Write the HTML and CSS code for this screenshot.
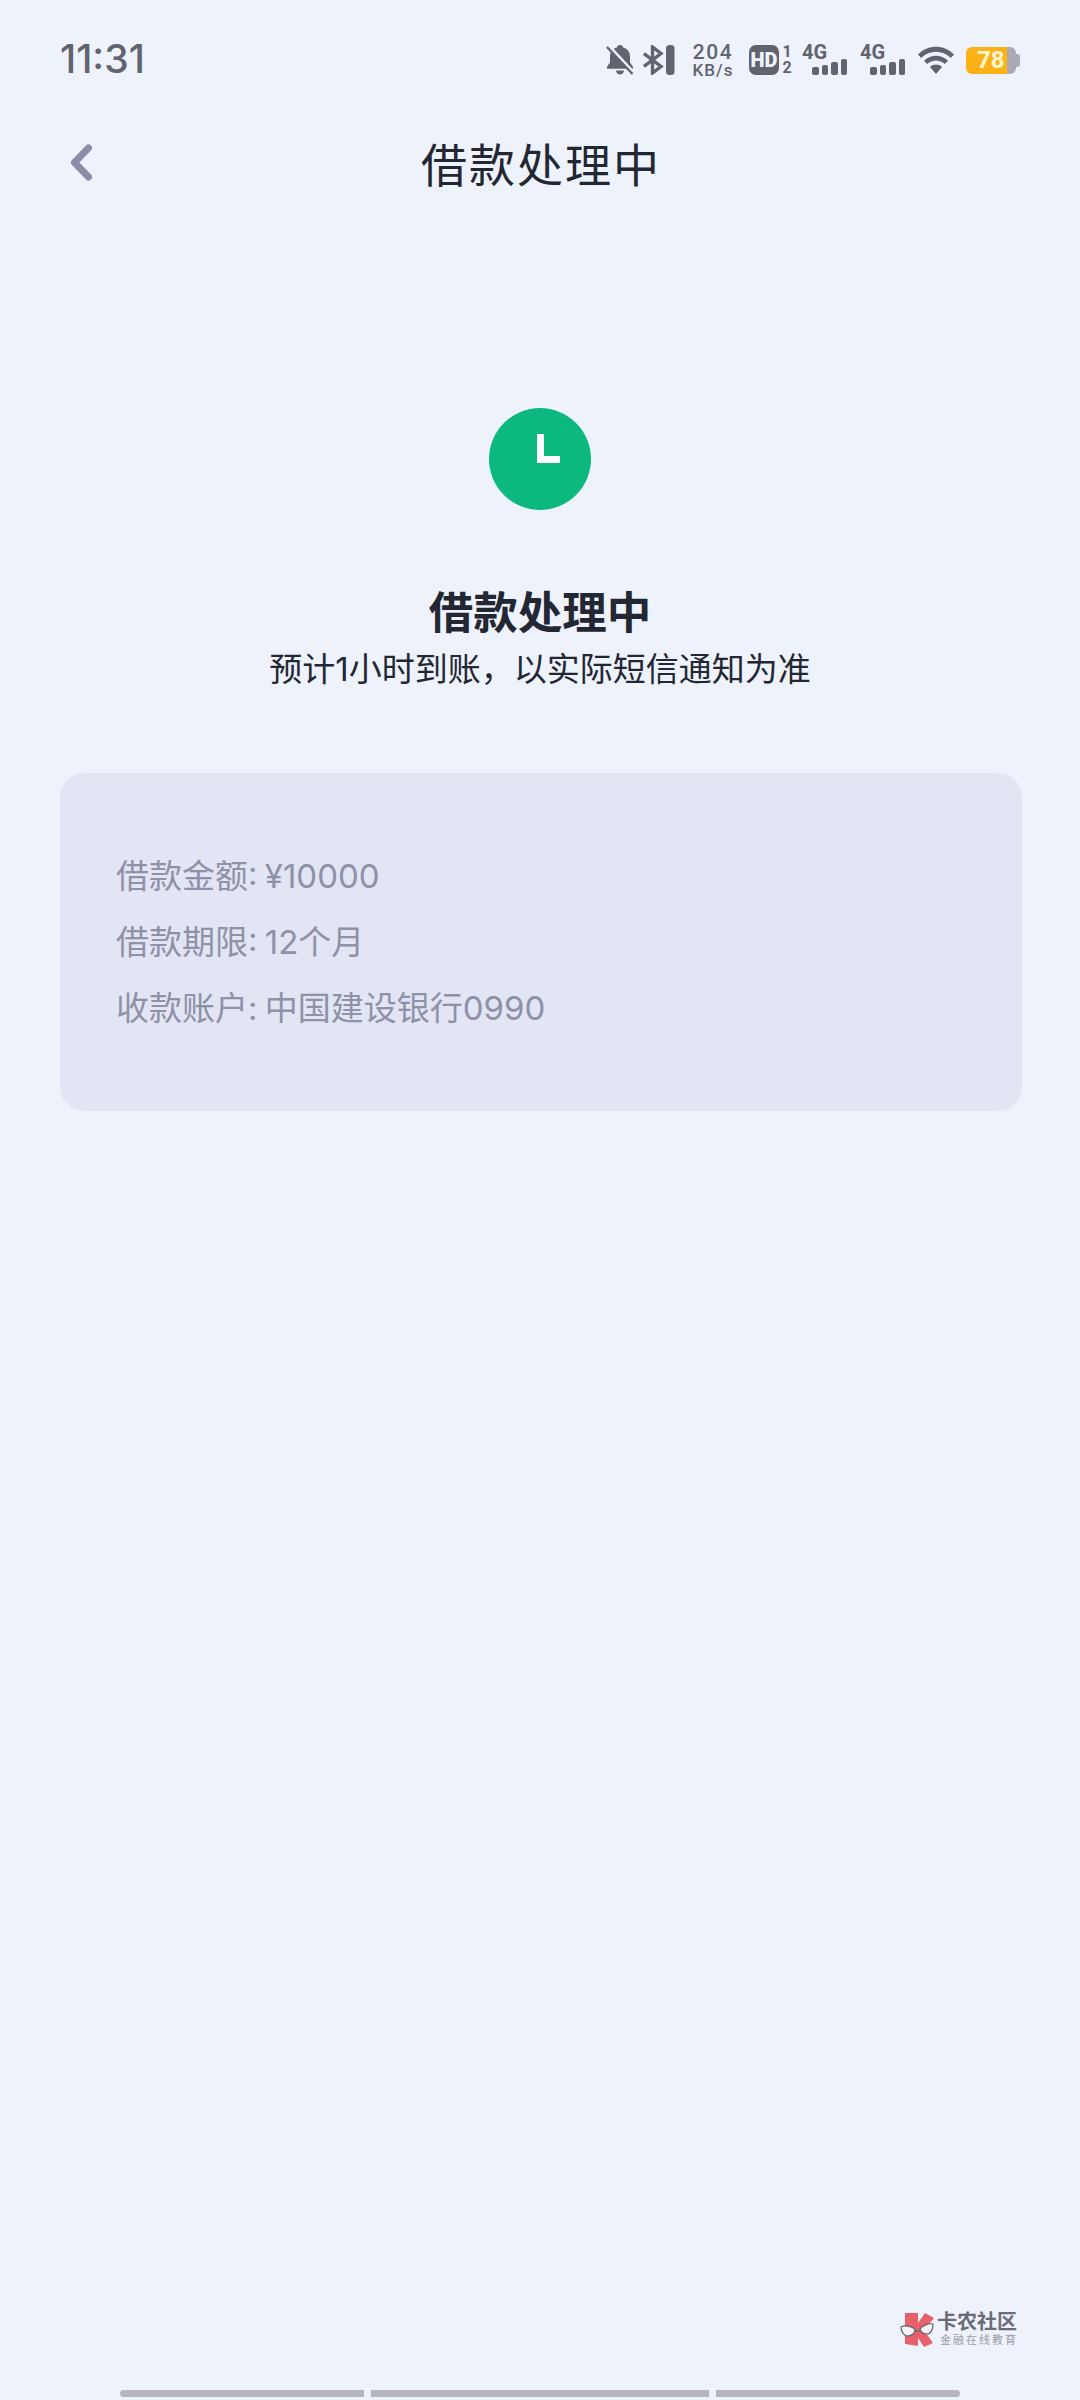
FILE: index.html
```html
<!DOCTYPE html>
<html lang="zh-CN">
<head>
<meta charset="UTF-8">
<title>借款处理中</title>
<link rel="stylesheet" href="styles.css">
</head>
<body>
<div class="page">
	<div class="status">
		<span class="time">11:31</span>
		<div class="status_icons">
			<svg class="ic_bell" width="28" height="30" viewBox="0 0 28 30">
				<path d="M14 0c1.800 0 2.900 1 3.100 2.500 4.500 1 6.900 4.700 6.900 9.200v5.800l3 4.300v2H1v-2l3-4.300v-5.800c0-4.500 2.400-8.200 6.900-9.200C11.100 1 12.200 0 14 0zM10 25.500h8c-.3 2.400-2 4-4 4s-3.700-1.600-4-4z" fill="#62636f"/>
				<path d="M3 1L27 27" stroke="#eef2fb" stroke-width="3"/>
				<path d="M1 2L26.500 29" stroke="#62636f" stroke-width="2.400"/>
			</svg>
			<svg class="ic_bt" width="32" height="30" viewBox="0 0 32 30">
				<path d="M1 8.500L18 21.500 9.500 28V2L18 8.500 1 21.500" fill="none" stroke="#62636f" stroke-width="3.400"/>
				<rect x="23" y="0" width="8.500" height="30" rx="3.500" fill="#62636f"/>
			</svg>
			<div class="speed"><span class="speed_num">204</span><span class="speed_unit">KB/s</span></div>
			<div class="hd">
				<span class="hd_box">HD</span>
				<div class="hd_sim"><span>1</span><span>2</span></div>
			</div>
			<div class="signal">
				<span class="signal_label">4G</span>
				<div class="bars"><i class="b1"></i><i class="b2"></i><i class="b3"></i><i class="b4"></i></div>
			</div>
			<div class="signal">
				<span class="signal_label">4G</span>
				<div class="bars"><i class="b1"></i><i class="b2"></i><i class="b3"></i><i class="b4"></i></div>
			</div>
			<svg class="ic_wifi" width="36" height="28" viewBox="0 0 36 28">
				<path d="M0 8.500C10 -1.800 26 -1.800 36 8.500l-3.200 3.400C24.500 3.700 11.500 3.700 3.200 11.900z" fill="#62636f"/>
				<path d="M6 14.800c6.800-6.800 17.200-6.800 24 0l-3.200 3.300c-5-4.900-12.600-4.900-17.600 0z" fill="#62636f"/>
				<path d="M12 21c3.500-3.200 8.500-3.200 12 0l-6 7z" fill="#62636f"/>
			</svg>
			<div class="battery"><div class="battery_level">78</div><i class="battery_tip"></i></div>
		</div>
	</div>

	<div class="nav">
		<svg class="back" width="23" height="37" viewBox="0 0 23 37">
			<path d="M18.500 4L4.500 18.500l14 14.500" fill="none" stroke="#8b8ea8" stroke-width="7" stroke-linecap="round" stroke-linejoin="round"/>
		</svg>
		<h1 class="nav_title">借款处理中</h1>
		<span></span>
	</div>

	<div class="result">
		<svg class="clock" width="102" height="102" viewBox="0 0 102 102">
			<circle cx="51" cy="51" r="51" fill="#0bb97e"/>
			<path d="M51.500 26V51.500H71" fill="none" stroke="#fff" stroke-width="7"/>
		</svg>
		<h2 class="result_title">借款处理中</h2>
		<p class="result_sub">预计1小时到账，以实际短信通知为准</p>
	</div>

	<div class="card">
		<p>借款金额: ¥10000</p>
		<p>借款期限: 12个月</p>
		<p>收款账户: 中国建设银行0990</p>
	</div>

	<div class="spacer"></div>

	<div class="brand">
		<svg class="brand_logo" width="34" height="35" viewBox="0 0 34 35">
			<path d="M5 1H18V11L25 1 34 6 24 18 33 31 24 35 18 26V34L5 32z" fill="#e8606a"/>
			<path d="M15 19H20" stroke="#62636f" stroke-width="1.200"/>
			<path d="M1 15C5 13 11 14 15 17 15 21 12 24 8 24 4 24 1 20 1 15z" fill="#f4f4f6" stroke="#62636f" stroke-width="1.200"/>
			<path d="M33 12C29 11 23 13 20 17 21 20 24 22 27 22 31 22 33 17 33 12z" fill="#f4f4f6" stroke="#62636f" stroke-width="1.200"/>
		</svg>
		<div class="brand_text">
			<span class="brand_name">卡农社区</span>
			<span class="brand_desc">金融在线教育</span>
		</div>
	</div>

	<div class="gesture">
		<i class="g1"></i><i class="g2"></i><i class="g3"></i>
	</div>
</div>
</body>
</html>
```
FILE: styles.css
```css
*{
	box-sizing: border-box;
}

html, body{
	margin: 0;
	padding: 0;
}

body{
	background: #eef2fb;
	font-family: "Inter", "Noto Sans CJK SC", sans-serif;
}

h1, h2, p{
	margin: 0;
	font-weight: normal;
}

.page{
	width: 1080px;
	height: 2400px;
	display: flex;
	flex-direction: column;
}

/* status bar */
.status{
	height: 118px;
	padding: 42px 60px 0 60px;
	display: flex;
	justify-content: space-between;
	align-items: flex-start;
}

.time{
	font-size: 39px;
	line-height: 34px;
	font-weight: 500;
	color: #62636f;
}

.status_icons{
	display: flex;
	align-items: center;
	height: 36px;
	color: #62636f;
}

.ic_bell{margin-right: 9px;}
.ic_bt{margin-right: 16px;}

.speed{
	width: 44px;
	margin-right: 14px;
	display: flex;
	flex-direction: column;
	align-items: center;
	font-family: "Roboto", sans-serif;
	font-weight: 500;
}

.speed_num{
	font-size: 21px;
	line-height: 20px;
	letter-spacing: 1.5px;
}

.speed_unit{
	font-size: 17px;
	line-height: 17px;
	letter-spacing: 1px;
}

.hd{
	display: flex;
	align-items: center;
	margin-right: 8px;
}

.hd_box{
	width: 30px;
	height: 30px;
	border-radius: 7px;
	background: #62636f;
	color: #eef2fb;
	font-family: "Roboto", sans-serif;
	font-size: 20px;
	line-height: 30px;
	font-weight: 900;
	text-align: center;
}

.hd_sim{
	display: flex;
	flex-direction: column;
	align-items: center;
	width: 14px;
	margin-left: 1px;
	font-family: "Roboto", sans-serif;
	font-size: 16px;
	line-height: 16px;
	font-weight: 700;
}

.signal{
	position: relative;
	width: 45px;
	height: 30px;
	margin-right: 13px;
}

.signal_label{
	position: absolute;
	left: 0;
	top: -3px;
	font-family: "Roboto", sans-serif;
	font-size: 20px;
	line-height: 20px;
	font-weight: 700;
}

.bars{
	position: absolute;
	right: 0;
	bottom: 0;
	display: flex;
	align-items: flex-end;
	gap: 3px;
}

.bars i{
	display: block;
	width: 6.500px;
	border-radius: 2px;
	background: #62636f;
}

.bars .b1{height: 8px;}
.bars .b2{height: 10px;}
.bars .b3{height: 13px;}
.bars .b4{height: 16px;}

.ic_wifi{margin-right: 12px;}

.battery{
	display: flex;
	align-items: center;
	width: 54px;
}

.battery_level{
	width: 50px;
	height: 27px;
	padding-left: 11px;
	border-radius: 6px;
	background: linear-gradient(to right, #fbb217 41px, #a9aab5 41px);
	color: #fdf6d0;
	font-family: "Roboto", sans-serif;
	font-size: 24px;
	line-height: 27px;
	font-weight: 700;
}

.battery_tip{
	width: 4px;
	height: 13px;
	border-radius: 0 3px 3px 0;
	background: #a9aab5;
}

/* nav */
.nav{
	display: grid;
	grid-template-columns: 1fr auto 1fr;
	align-items: center;
	height: 94px;
	padding: 0 60px 0 70px;
}

.back{
	display: block;
	margin-bottom: 5px;
}

.nav_title{
	font-size: 46px;
	line-height: 94px;
	letter-spacing: 2px;
	color: #222733;
	transform: translateX(-4px);
}

/* result */
.result{
	margin-top: 196px;
	display: flex;
	flex-direction: column;
	align-items: center;
}

.result_title{
	margin-top: 76px;
	font-size: 44.500px;
	line-height: 54px;
	font-weight: 700;
	color: #222733;
}

.result_sub{
	margin-top: 7px;
	font-size: 33px;
	line-height: 44px;
	color: #222733;
}

/* info card */
.card{
	width: 962px;
	height: 338px;
	margin: 82px 0 0 60px;
	padding: 70px 0 0 56px;
	border-radius: 24px;
	background: #e2e5f3;
}

.card p{
	font-size: 33px;
	line-height: 66px;
	word-spacing: -2px;
	color: #8e91a8;
}

.spacer{
	flex: 1;
}

/* watermark */
.brand{
	display: flex;
	align-items: center;
	gap: 3px;
	align-self: flex-end;
	margin: 0 62px 43px 0;
}

.brand_text{
	display: flex;
	flex-direction: column;
}

.brand_name{
	font-size: 20px;
	line-height: 22px;
	font-weight: 700;
	color: #6a6b78;
}

.brand_desc{
	padding-left: 3px;
	font-size: 11px;
	line-height: 14px;
	letter-spacing: 2px;
	color: #9a9ba8;
}

/* gesture bar */
.gesture{
	display: flex;
	gap: 7px;
	padding: 0 120px;
	height: 10px;
}

.gesture i{
	display: block;
	height: 7px;
	background: #b4b5c0;
}

.g1{width: 245px; border-radius: 4px 0 0 4px;}
.g2{width: 338px;}
.g3{width: 245px; border-radius: 0 4px 4px 0;}
```
